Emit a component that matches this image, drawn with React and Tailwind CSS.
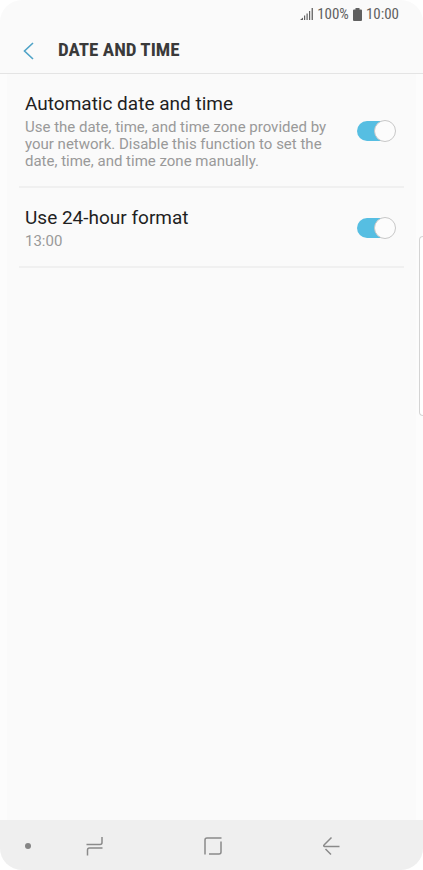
import React, { useState } from 'react';

const settings = [
  {
    id: 'auto-date',
    title: 'Automatic date and time',
    text: 'Use the date, time, and time zone provided by your network. Disable this function to set the date, time, and time zone manually.',
  },
  {
    id: 'hour-format',
    title: 'Use 24-hour format',
    text: '13:00',
  },
];

const StatusBar = () => (
  <div className="flex h-7 items-center justify-end gap-1 pr-6 font-['Roboto_Condensed',Roboto,sans-serif] text-[15px] text-[#606060]">
    <svg className="h-3 w-[13px]" viewBox="0 0 13 12" fill="currentColor" aria-hidden="true">
      <path d="M0 12l3-2.500V12zM4 7.500h1.200V12H4zM6.500 5.500h1.200V12H6.500zM9 3h1.200v9H9zM11.600 0h1.300v12h-1.300z" />
    </svg>
    <span>100%</span>
    <svg className="h-[13px] w-[9px]" viewBox="0 0 9 13" fill="currentColor" aria-hidden="true">
      <path d="M2.500 0h4v1.500H8a1 1 0 0 1 1 1V12a1 1 0 0 1-1 1H1a1 1 0 0 1-1-1V2.500a1 1 0 0 1 1-1h1.500z" />
    </svg>
    <span>10:00</span>
  </div>
);

const SettingRow = ({ id, title, text }) => {
  const [on, setOn] = useState(true);

  return (
    <li className="mx-3 flex items-center justify-between border-b-2 border-[#f0f0f0] pt-[18px] pr-[7px] pb-4 pl-[6px]">
      <label htmlFor={id} className="w-[304px]">
        <span className="block text-[19px] leading-6 text-[#1f1f1f]">{title}</span>
        <span className="mt-[3px] block text-[15px] leading-[17px] text-[#999999]">{text}</span>
      </label>
      <span className="relative flex h-[22px] w-10 shrink-0 items-center">
        <input
          id={id}
          type="checkbox"
          role="switch"
          checked={on}
          onChange={() => setOn(!on)}
          className="peer h-5 w-9 appearance-none rounded-full bg-[#cccccc] checked:bg-[#56bee2]"
        />
        <span className="pointer-events-none absolute top-0 left-0 size-[22px] rounded-full border border-[#c8c8c8] bg-[#fcfcfc] peer-checked:left-[17px]" />
      </span>
    </li>
  );
};

const NavBar = () => (
  <nav className="flex h-[50px] items-center bg-[#efefef] pt-[2px] pl-[25px] text-[#8a8a8a]">
    <button type="button" aria-label="Hide navigation bar" className="size-[6px] rounded-full bg-[#858585]" />
    <div className="flex flex-1 justify-between pr-[82px] pl-[54px]">
      <button type="button" aria-label="Recent apps">
        <svg className="size-5" viewBox="0 0 20 20" fill="none" stroke="currentColor" strokeWidth="1.5" aria-hidden="true">
          <path d="M1.500 8.500H15a2 2 0 0 0 2-2V1M17.500 12H4.500a2 2 0 0 0-2 2v5.500" />
        </svg>
      </button>
      <button type="button" aria-label="Home">
        <svg className="size-5" viewBox="0 0 20 20" fill="none" stroke="currentColor" strokeWidth="1.5" aria-hidden="true">
          <path d="M2 18.500V4a2 2 0 0 1 2-2h14.500M18 5.500V16a2 2 0 0 1-2 2H6" />
        </svg>
      </button>
      <button type="button" aria-label="Back">
        <svg className="size-5" viewBox="0 0 20 20" fill="none" stroke="currentColor" strokeWidth="1.5" strokeLinejoin="round" aria-hidden="true">
          <path d="M10.500 1.500L3 9a.8.8 0 0 0 .6 1.400H18.500M4.500 13l5.500 5.500" />
        </svg>
      </button>
    </div>
  </nav>
);

const App = () => {
  return (
    <div className="min-h-screen bg-white font-[Roboto,sans-serif]">
      <div className="relative flex min-h-screen flex-col overflow-hidden rounded-[22px] bg-[#fafafa]">
        <StatusBar />

        <header className="flex h-[46px] items-center border-b border-[#e4e4e4] pl-[23px]">
          <button type="button" aria-label="Back" className="text-[#4fa3c7]">
            <svg className="h-[18px] w-[11px]" viewBox="0 0 11 18" fill="none" stroke="currentColor" strokeWidth="1.6" aria-hidden="true">
              <path d="M10 1L1.500 9l8.500 8" />
            </svg>
          </button>
          <h1 className="pl-6 font-['Roboto_Condensed',Roboto,sans-serif] text-[19px] font-bold text-[#3a3a3a]">DATE AND TIME</h1>
        </header>

        <ul className="flex-1 border-x-[7px] border-[#fcfcfc]">
          {settings.map((item) => (
            <SettingRow key={item.id} {...item} />
          ))}
        </ul>

        <NavBar />

        {/* Edge panel handle */}
        <div className="absolute top-[236px] right-0 h-[180px] w-1 rounded-l-[5px] border border-r-0 border-[#d4d4d4] bg-white" />
      </div>
    </div>
  );
};

export default App;
